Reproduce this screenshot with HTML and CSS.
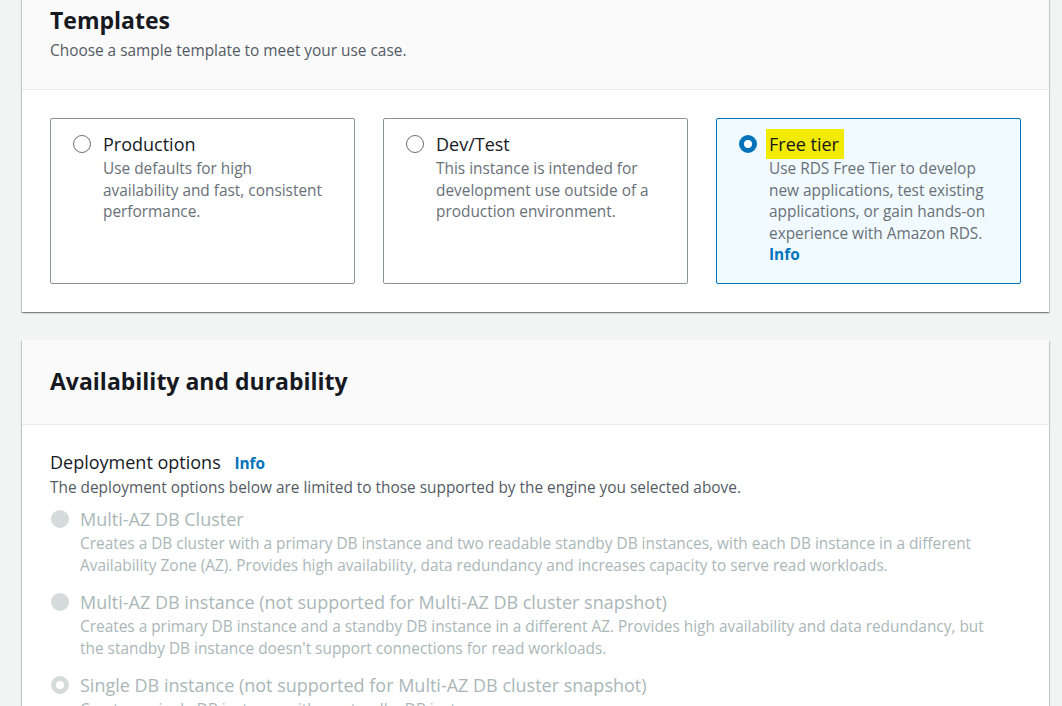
FILE: index.html
```html
<!DOCTYPE html>
<html lang="en">
<head>
<meta charset="utf-8">
<title>Create database</title>
<link rel="stylesheet" href="styles.css">
</head>
<body>
<div class="page">
  <section class="panel panel-templates">
    <header class="panel-header">
      <h2 class="panel-title">Templates</h2>
      <p class="panel-desc">Choose a sample template to meet your use case.</p>
    </header>
    <div class="panel-body">
      <div class="tiles">
        <div class="tile">
          <span class="radio"></span>
          <div class="tile-text">
            <div class="tile-title">Production</div>
            <div class="tile-desc">Use defaults for high availability and fast, consistent performance.</div>
          </div>
        </div>
        <div class="tile">
          <span class="radio"></span>
          <div class="tile-text">
            <div class="tile-title">Dev/Test</div>
            <div class="tile-desc">This instance is intended for development use outside of a production environment.</div>
          </div>
        </div>
        <div class="tile tile-selected">
          <span class="radio radio-checked"></span>
          <div class="tile-text">
            <div class="tile-title"><span class="highlight">Free tier</span></div>
            <div class="tile-desc">Use RDS Free Tier to develop new applications, test existing applications, or gain hands-on experience with Amazon RDS.<br><a class="info-link" href="#">Info</a></div>
          </div>
        </div>
      </div>
    </div>
  </section>

  <section class="panel panel-availability">
    <header class="panel-header panel-header-plain">
      <h2 class="panel-title">Availability and durability</h2>
    </header>
    <div class="panel-body">
      <div class="field-label">Deployment options <a class="info-link info-inline" href="#">Info</a></div>
      <div class="field-desc">The deployment options below are limited to those supported by the engine you selected above.</div>
      <div class="options">
        <div class="option">
          <span class="radio radio-disabled"></span>
          <div class="option-text">
            <div class="option-title">Multi-AZ DB Cluster</div>
            <div class="option-desc">Creates a DB cluster with a primary DB instance and two readable standby DB instances, with each DB instance in a different Availability Zone (AZ). Provides high availability, data redundancy and increases capacity to serve read workloads.</div>
          </div>
        </div>
        <div class="option">
          <span class="radio radio-disabled"></span>
          <div class="option-text">
            <div class="option-title">Multi-AZ DB instance (not supported for Multi-AZ DB cluster snapshot)</div>
            <div class="option-desc">Creates a primary DB instance and a standby DB instance in a different AZ. Provides high availability and data redundancy, but the standby DB instance doesn't support connections for read workloads.</div>
          </div>
        </div>
        <div class="option">
          <span class="radio radio-disabled-checked"></span>
          <div class="option-text">
            <div class="option-title">Single DB instance (not supported for Multi-AZ DB cluster snapshot)</div>
            <div class="option-desc">Creates a single DB instance with no standby DB instances.</div>
          </div>
        </div>
      </div>
    </div>
  </section>
</div>
</body>
</html>
```
FILE: styles.css
```css
* { box-sizing: border-box; }
html, body { margin: 0; padding: 0; }
body {
  background: #f2f3f3;
  font-family: "Open Sans", "Noto Sans", Arial, sans-serif;
  color: #16191f;
  overflow: hidden;
}
.page {
  margin-top: -21px;
  padding: 0 13px 0 22px;
  display: flex;
  flex-direction: column;
  gap: 28px;
}
.panel {
  background: #ffffff;
  box-shadow: 0 1px 1px 0 rgba(0, 28, 36, 0.3), 1px 1px 1px 0 rgba(0, 28, 36, 0.15), -1px 1px 1px 0 rgba(0, 28, 36, 0.15);
}
.panel-header {
  background: #fafafa;
  border-bottom: 1px solid #eaeded;
  padding: 25px 28px 26px;
}
.panel-header-plain {
  padding: 25px 28px 27px;
}
.panel-title {
  margin: 0;
  font-size: 23px;
  line-height: 32px;
  font-weight: 700;
  color: #16191f;
}
.panel-desc {
  margin: 3px 0 0;
  font-size: 15.4px;
  line-height: 24px;
  color: #545b64;
}
.panel-body {
  padding: 28px;
}
.tiles {
  display: grid;
  grid-template-columns: repeat(3, 1fr);
  gap: 28px;
}
.tile {
  height: 166px;
  border: 1px solid #879596;
  border-radius: 2px;
  padding: 12px 25px 10px 22px;
  display: flex;
  gap: 12px;
  background: #ffffff;
}
.tile-selected {
  border-color: #0073bb;
  background: #f1faff;
}
.radio {
  flex: none;
  width: 18px;
  height: 18px;
  margin-top: 4px;
  border-radius: 50%;
  border: 1.5px solid #687078;
  background: #ffffff;
}
.radio-checked {
  border: 5.5px solid #0073bb;
  background: #ffffff;
}
.radio-disabled {
  border: none;
  background: #d5dbdb;
}
.radio-disabled-checked {
  border: 5px solid #d5dbdb;
  background: #ffffff;
}
.tile-title {
  font-size: 18px;
  line-height: 26px;
  color: #16191f;
}
.highlight {
  background: #f2ea00;
  padding: 3px 5px 3px 3px;
  margin-left: -3px;
}
.tile-desc {
  margin-top: 1px;
  font-size: 15.4px;
  line-height: 21.5px;
  color: #687078;
}
.info-link {
  color: #0073bb;
  font-weight: 700;
  text-decoration: none;
  font-size: 15.4px;
}
.info-inline {
  margin-left: 9px;
}
.field-label {
  margin-top: -4px;
  font-size: 18px;
  line-height: 26px;
  color: #16191f;
}
.field-desc {
  margin-top: 0;
  font-size: 15.4px;
  line-height: 22px;
  color: #545b64;
}
.options {
  margin-top: 7px;
  display: flex;
  flex-direction: column;
  gap: 12px;
}
.option {
  display: flex;
  gap: 11px;
}
.option .radio {
  margin-left: 1px;
  margin-top: 4px;
}
.option-text {
  padding-right: 22px;
}
.option-title {
  font-size: 18px;
  line-height: 26px;
  color: #aab7b8;
}
.option-desc {
  margin-top: 1px;
  font-size: 15.4px;
  line-height: 22px;
  color: #aab7b8;
}
```
